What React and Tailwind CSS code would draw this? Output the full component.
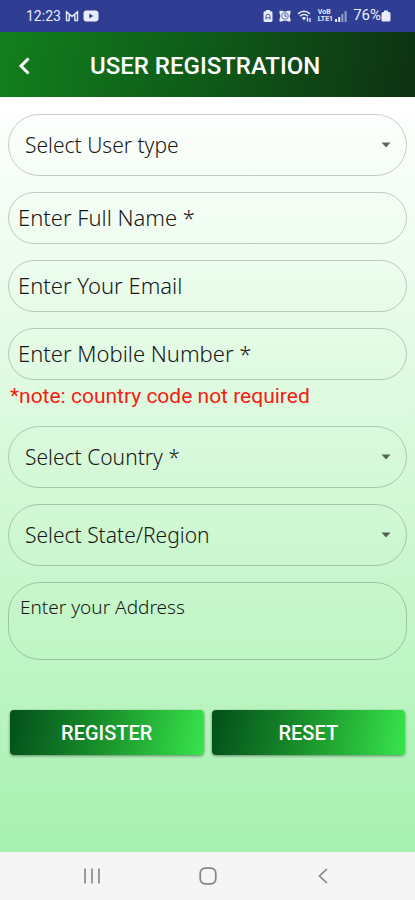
import { useState } from 'react';

const SELECT_CLASS =
  "block w-full h-[62px] appearance-none rounded-full border border-black/20 bg-transparent pl-4 pr-10 pt-0.5 font-['Noto_Sans',sans-serif] text-[21px] font-[350] text-neutral-900 outline-none";
const INPUT_CLASS =
  "block w-full h-13 rounded-full border border-black/20 bg-transparent px-[9px] pb-0.5 font-['Noto_Sans',sans-serif] text-[22px] font-[350] text-neutral-900 placeholder:text-neutral-900 outline-none";
const BUTTON_CLASS =
  'h-[45px] flex-1 rounded-sm bg-linear-100 from-[#04501a] via-[#1a942b] via-50% to-[#38e54c] text-xl font-medium text-white shadow-[0_1px_3px_rgba(0,0,0,0.45)]';

const SelectField = ({ label, options }) => (
  <div className="relative">
    <select aria-label={label} className={SELECT_CLASS} defaultValue="">
      <option value="">{label}</option>
      {options.map((option) => (
        <option key={option}>{option}</option>
      ))}
    </select>
    <svg className="pointer-events-none absolute right-4 top-7 h-[6px] w-[10px]" viewBox="0 0 10 6" aria-hidden="true">
      <path d="M0.5 0.5h9L5 5.5z" fill="#000" fillOpacity="0.6" />
    </svg>
  </div>
);

const StatusBar = () => (
  <div className="flex h-8 items-center justify-between bg-[#2f3e92] pl-[26px] pr-6 text-sm text-[#e9ecfb]">
    <div className="flex items-center gap-1">
      <span>12:23</span>
      <svg className="h-3 w-[14px]" viewBox="0 0 14 12" fill="none" stroke="currentColor" aria-hidden="true">
        <path d="M1.500 10.500V1.800L7 6.500l5.500-4.700v8.700M4.200 10.500V4.500M9.800 10.500V4.500M1 10.500h3.500M9.500 10.500H13" strokeWidth="1.400" />
      </svg>
      <svg className="h-3 w-4" viewBox="0 0 16 12" aria-hidden="true">
        <rect x="0.500" y="0.500" width="15" height="11" rx="3" fill="currentColor" />
        <path d="M6.300 3.500v5l4-2.500z" fill="#2f3e92" />
      </svg>
    </div>
    <div className="flex items-center">
      <svg className="mr-1.5 h-3.5 w-[10px]" viewBox="0 0 10 14" aria-hidden="true">
        <path d="M3 1h4v1.200h1.200Q9.500 2.200 9.500 3.600v8q0 1.400-1.400 1.400H1.900Q.5 13 .5 11.600v-8Q.5 2.200 1.800 2.200H3z" fill="currentColor" />
        <path d="M3 10.500V7.200a2 2 0 0 1 4 0v3.300M3 8.800h4" fill="none" stroke="#2f3e92" strokeWidth="0.800" />
      </svg>
      <svg className="mr-1.5 h-3 w-3" viewBox="0 0 12 12" aria-hidden="true">
        <path d="M.5.8h3l1 .6h3l1-.6h3v3l-.7.700v3.200l.7 1v2.800H9l-1-.7H4l-1 .7H.5V8.700l.7-1V4.500L.5 3.800z" fill="currentColor" />
        <circle cx="6" cy="6" r="3.300" fill="none" stroke="#2f3e92" strokeWidth="0.700" />
        <path d="M6 4v2.200h1.700" fill="none" stroke="#2f3e92" strokeWidth="0.900" />
      </svg>
      <svg className="mr-1.5 h-3.5 w-[15px]" viewBox="0 0 15 14" fill="none" stroke="currentColor" aria-hidden="true">
        <path d="M1 4.800q6-5 12 0M3 7.200q4-3.300 8 0" strokeWidth="1.500" />
        <path d="M4.800 8.800Q7 7 9.200 8.800L7 11.500z" fill="currentColor" stroke="none" />
        <path d="M10.500 8.500v4M13 9v4" strokeWidth="1.300" />
      </svg>
      <span className="mr-0.5 flex flex-col text-[7px] font-bold leading-[7px]">
        <span>VoB</span>
        <span>LTE1</span>
      </span>
      <svg className="mr-1.5 h-3 w-3" viewBox="0 0 12 12" fill="currentColor" aria-hidden="true">
        <path d="M0 9h2v3H0zM3.200 7h2v5h-2z" />
        <path d="M6.400 4h2v8h-2zM9.600 1h2v11h-2z" opacity="0.550" />
      </svg>
      <span className="text-[15px]">76%</span>
      <svg className="h-3 w-[10px]" viewBox="0 0 10 12" aria-hidden="true">
        <path d="M3 .5h4V2h1q1.500 0 1.500 1.500V10q0 1.500-1.500 1.500H2Q.5 11.500.5 10V3.500Q.5 2 2 2h1z" fill="currentColor" />
      </svg>
    </div>
  </div>
);

const NavBar = () => (
  <nav className="flex h-12 items-center justify-around bg-[#f5f5f5] px-[34px] text-[#858585]">
    <button type="button" aria-label="Recent apps" className="flex h-12 flex-1 items-center justify-center">
      <svg className="h-4 w-4" viewBox="0 0 16 16" stroke="currentColor" strokeWidth="1.600" aria-hidden="true">
        <path d="M1 .5v15M8 .5v15M15 .5v15" />
      </svg>
    </button>
    <button type="button" aria-label="Home" className="flex h-12 flex-1 items-center justify-center">
      <svg className="h-[18px] w-[18px]" viewBox="0 0 18 18" fill="none" stroke="currentColor" strokeWidth="1.700" aria-hidden="true">
        <rect x="1.200" y="1.200" width="15.600" height="15.600" rx="5" />
      </svg>
    </button>
    <button type="button" aria-label="Back" className="flex h-12 flex-1 items-center justify-center">
      <svg className="h-4 w-[10px]" viewBox="0 0 10 16" fill="none" stroke="currentColor" strokeWidth="1.700" aria-hidden="true">
        <path d="M9 1 1.500 8 9 15" />
      </svg>
    </button>
  </nav>
);

const App = () => {
  const [form, setForm] = useState({ name: '', email: '', mobile: '', address: '' });

  const handleChange = (e) => setForm({ ...form, [e.target.name]: e.target.value });

  return (
    <div className="flex min-h-screen flex-col font-[Roboto,sans-serif]">
      <StatusBar />

      {/* App bar */}
      <header className="flex h-[65px] items-center bg-linear-100 from-[#12801d] via-[#0e5a18] via-50% to-[#0d3212] pt-0.5 text-white">
        <button type="button" aria-label="Go back" className="flex h-full w-12 items-center justify-center">
          <svg className="h-[18px] w-3" viewBox="0 0 12 18" fill="none" stroke="currentColor" strokeWidth="3" aria-hidden="true">
            <path d="M10.500 1.500 3 9l7.500 7.500" />
          </svg>
        </button>
        <h1 className="flex-1 pl-[42px] text-2xl font-medium whitespace-nowrap">USER REGISTRATION</h1>
      </header>

      <main className="flex-1 bg-linear-to-b from-white to-[#a7f1b0] px-2 pt-[17px] pb-8">
        <form className="flex flex-col gap-4" onSubmit={(e) => e.preventDefault()}>
          <SelectField label="Select User type" options={['Individual', 'Organisation']} />
          <input className={INPUT_CLASS} name="name" aria-label="Full name" placeholder="Enter Full Name *" value={form.name} onChange={handleChange} />
          <input className={INPUT_CLASS} name="email" type="email" aria-label="Email" placeholder="Enter Your Email" value={form.email} onChange={handleChange} />
          <div>
            <input className={INPUT_CLASS} name="mobile" type="tel" aria-label="Mobile number" aria-describedby="mobile-note" placeholder="Enter Mobile Number *" value={form.mobile} onChange={handleChange} />
            <p id="mobile-note" className="pt-0.5 pl-0.5 text-[21px] leading-7 text-[#f81b12]">*note: country code not required</p>
          </div>
          <SelectField label="Select Country *" options={['India', 'Nepal']} />
          <SelectField label="Select State/Region" options={['Gujarat', 'Kerala']} />
          <textarea
            className="block h-[78px] w-full resize-none rounded-[32px] border border-black/20 bg-transparent px-[11px] py-2.5 font-['Noto_Sans',sans-serif] text-[19px] leading-7 font-[350] text-neutral-900 placeholder:text-neutral-900 outline-none"
            name="address"
            aria-label="Address"
            placeholder="Enter your Address"
            value={form.address}
            onChange={handleChange}
          />
          <div className="mt-[34px] flex gap-2 px-0.5">
            <button type="submit" className={BUTTON_CLASS}>REGISTER</button>
            <button type="reset" className={BUTTON_CLASS} onClick={() => setForm({ name: '', email: '', mobile: '', address: '' })}>RESET</button>
          </div>
        </form>
      </main>

      <NavBar />
    </div>
  );
};

export default App;
